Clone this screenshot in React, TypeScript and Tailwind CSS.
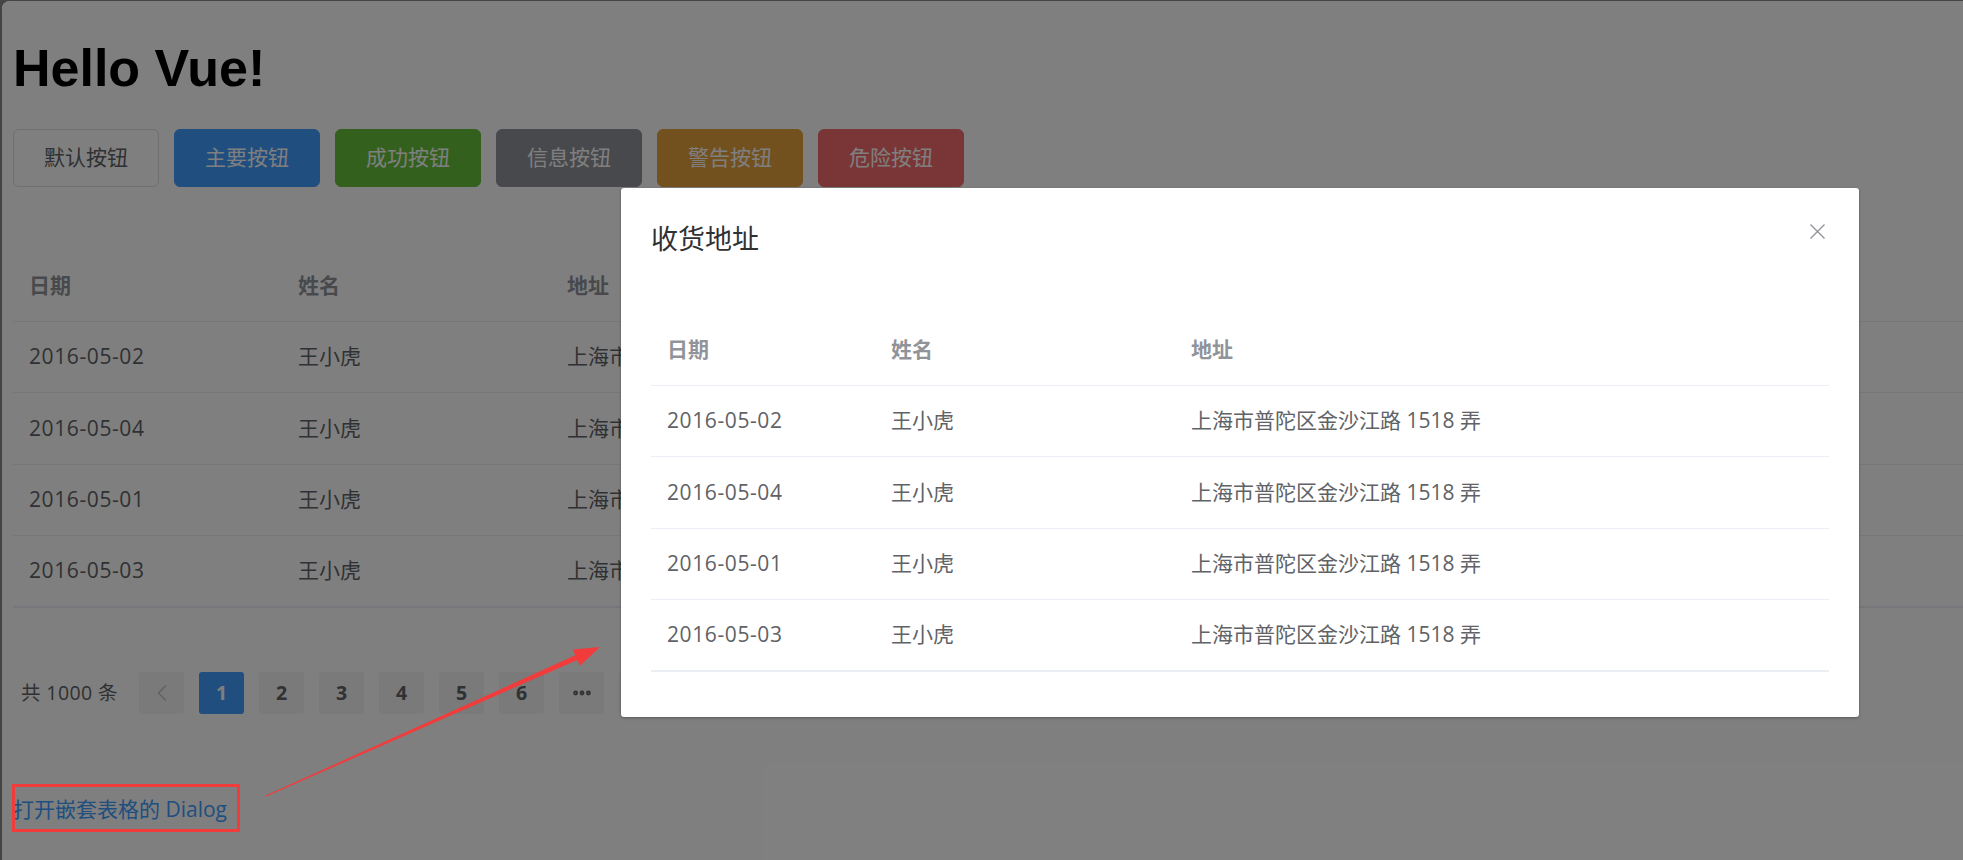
import React from "react";
import { ChevronLeft, ChevronRight, Ellipsis } from "lucide-react";

const rows = [
  { date: "2016-05-02", name: "王小虎", address: "上海市普陀区金沙江路 1518 弄" },
  { date: "2016-05-04", name: "王小虎", address: "上海市普陀区金沙江路 1518 弄" },
  { date: "2016-05-01", name: "王小虎", address: "上海市普陀区金沙江路 1518 弄" },
  { date: "2016-05-03", name: "王小虎", address: "上海市普陀区金沙江路 1518 弄" },
];

const buttons = [
  { label: "默认按钮", cls: "bg-white border-[#DCDFE6] text-[#606266]" },
  { label: "主要按钮", cls: "bg-[#409EFF] border-[#409EFF] text-white" },
  { label: "成功按钮", cls: "bg-[#67C23A] border-[#67C23A] text-white" },
  { label: "信息按钮", cls: "bg-[#909399] border-[#909399] text-white" },
  { label: "警告按钮", cls: "bg-[#E6A23C] border-[#E6A23C] text-white" },
  { label: "危险按钮", cls: "bg-[#F56C6C] border-[#F56C6C] text-white" },
];

function DataTable({ first, second }: { first: string; second: string }) {
  return (
    <div className="w-full text-[21px]">
      {/* header */}
      <div className="flex h-[71.5px] items-center border-b border-[#EBEEF5] font-bold text-[#909399]">
        <div className={`${first} shrink-0 pl-4`}>日期</div>
        <div className={`${second} shrink-0 pl-4`}>姓名</div>
        <div className="flex-1 pl-4">地址</div>
      </div>
      {rows.map((r, i) => (
        <div
          key={r.date}
          className={`flex h-[71.5px] items-center border-[#EBEEF5] text-[#606266] ${
            i === rows.length - 1 ? "border-b-2" : "border-b"
          }`}
        >
          <div className={`${first} shrink-0 pl-4 tracking-[0.6px]`}>{r.date}</div>
          <div className={`${second} shrink-0 pl-4`}>{r.name}</div>
          <div className="flex-1 pl-4">{r.address}</div>
        </div>
      ))}
    </div>
  );
}

function Pager() {
  const pageBtn = "flex h-[42px] w-[45px] items-center justify-center rounded-[3px] bg-[#F4F4F5]";
  return (
    <div className="mt-[64px] flex h-[42px] items-center pl-[8px] text-[19.5px] text-[#606266]">
      <span className="w-[118px] shrink-0 tracking-[0.4px]">共 1000 条</span>
      <div className="flex gap-[15px] font-bold">
        <button className={`${pageBtn} text-[#C0C4CC]`}>
          <ChevronLeft size={28} strokeWidth={1.3} />
        </button>
        {["1", "2", "3", "4", "5", "6"].map((p) => (
          <button
            key={p}
            className={p === "1" ? `${pageBtn} !bg-[#409EFF] text-white` : pageBtn}
          >
            {p}
          </button>
        ))}
        <button className={pageBtn}>
          <Ellipsis size={22} strokeWidth={3.2} />
        </button>
        <button className={pageBtn}>100</button>
        <button className={pageBtn}>
          <ChevronRight size={28} strokeWidth={1.3} />
        </button>
      </div>
    </div>
  );
}

export default function App() {
  return (
    <div className="relative h-[860px] w-[1963px] overflow-hidden bg-[#454545] pl-[2px] pt-[1px] font-['Open_Sans','Noto_Sans_CJK_SC',sans-serif]">
      <div className="relative h-full overflow-hidden rounded-tl-[8px] bg-white pl-[11px]">
        <h1 className="mt-[42px] font-['Liberation_Sans','Noto_Sans_CJK_SC',sans-serif] text-[52px] font-bold leading-[50px] text-black">
          Hello Vue!
        </h1>

        <div className="mt-[36px] flex gap-[15px]">
          {buttons.map((b) => (
            <button
              key={b.label}
              className={`flex h-[58px] w-[146px] items-center justify-center rounded-[6px] border text-[21px] ${b.cls}`}
            >
              {b.label}
            </button>
          ))}
        </div>

        <div className="mt-[63px]">
          <DataTable first="w-[269px]" second="w-[269px]" />
        </div>

        <Pager />

        <div className="mt-[80px] text-[21px] leading-[30px]">
          <a className="text-[#409EFF]">打开嵌套表格的 Dialog</a>
        </div>

        {/* modal mask */}
        <div className="absolute inset-0 bg-black/50" />
      </div>

      {/* dialog */}
      <div className="absolute left-[621px] top-[188px] w-[1238px] rounded-[3px] bg-white shadow-[0_1px_3px_rgba(0,0,0,0.3)]">
        <div className="relative px-[30px] pb-[12px] pt-[33px]">
          <span className="text-[27px] leading-[36px] text-[#303133]">收货地址</span>
          <button className="absolute right-[34px] top-[36px] text-[#909399]">
            <svg width="15" height="15" viewBox="0 0 15 15" fill="none" stroke="currentColor" strokeWidth="1.4">
              <path d="M0.5 0.5 14.5 14.5M14.5 0.5 0.5 14.5" />
            </svg>
          </button>
        </div>
        <div className="px-[30px] pb-[45px] pt-[45px]">
          <DataTable first="w-[224px]" second="w-[300px]" />
        </div>
      </div>

      {/* annotation */}
      <div className="pointer-events-none absolute left-[12px] top-[784px] h-[48px] w-[228px] border-[3px] border-[#F23C3C]" />
      <svg
        className="pointer-events-none absolute left-0 top-0"
        width="1963"
        height="860"
        viewBox="0 0 1963 860"
      >
        <polygon
          points="265.8,795.5 575.3,655.3 572.6,649.4 600,647 580,665.8 577.3,659.9 266.2,796.5"
          fill="#F23C3C"
        />
      </svg>
    </div>
  );
}
